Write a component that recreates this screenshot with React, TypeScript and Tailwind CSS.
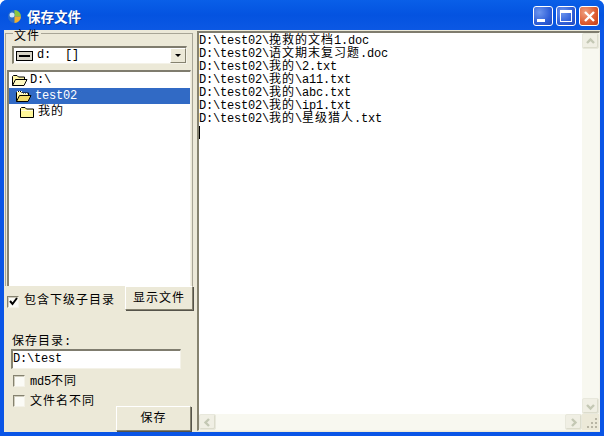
import React from "react";

const sunken = "border-t-2 border-l-2 border-t-[#7f7c6e] border-l-[#85826f] border-r border-b border-r-[#f4f2e8] border-b-[#f4f2e8]";
const raised = "border border-t-white border-l-white border-r-[#85826f] border-b-[#85826f] bg-[#ece9d8] pt-[2px] shadow-[1px_1px_0_#55534a]";

// latin runs are 7px wide per char, the CJK ones 13px
function T({ children }: { children: string }) {
  const parts = children.split(/([\u4e00-\u9fff]+)/).filter(Boolean);
  return (
    <>
      {parts.map((p, i) =>
        /[\u4e00-\u9fff]/.test(p) ? (
          <span key={i} className="tracking-[1px]">{p}</span>
        ) : (
          <span key={i} className="whitespace-pre">{p}</span>
        ),
      )}
    </>
  );
}

function Folder({ open, selected }: { open?: boolean; selected?: boolean }) {
  return (
    <svg width="17" height="13" viewBox="0 0 17 13" className="shrink-0">
      {open ? (
        <>
          <path d="M1.5 11.5V2.5L2.5 1.5H6L7.5 3H13.5V5" fill="#fff6a8" stroke="#000" />
          <path d="M1.5 11.5L4.5 5.5H16L13 11.5Z" fill={selected ? "#f2dc6a" : "#fff9c0"} stroke="#000" />
          {selected && <path d="M2 1h1v1H2zM4 1h1v1H4zM6 1h1v1H6zM3 3h1v1H3zM5 3h1v1H5zM7 3h1v1H7zM9 3h1v1H9zM11 3h1v1h-1z" fill="#fff" />}
        </>
      ) : (
        <>
          <path d="M1.5 11.5V2.5L2.5 1.5H6L7.5 3H14.5V11.5Z" fill="#fff79a" stroke="#000" />
          <path d="M2 4.5H14" stroke="#fffde0" />
        </>
      )}
    </svg>
  );
}

function Check({ checked }: { checked?: boolean }) {
  return (
    <span className="flex h-[12px] w-[12px] shrink-0 items-center justify-center border-t border-l border-t-[#85826f] border-l-[#85826f] border-r border-b border-r-[#f4f2e8] border-b-[#f4f2e8] bg-[#fbfbf6] shadow-[inset_1px_1px_0_#d0cdbd]">
      {checked && (
        <svg width="9" height="9" viewBox="0 0 9 9">
          <path d="M1 4l2.5 3L8 1" fill="none" stroke="#000" strokeWidth="2" />
        </svg>
      )}
    </span>
  );
}

function CaptionButton({ kind }: { kind: "min" | "max" | "close" }) {
  const bg =
    kind === "close"
      ? "bg-[radial-gradient(circle_at_30%_30%,#f0a080,#dc5a30_60%,#c03c18)]"
      : "bg-[radial-gradient(circle_at_30%_30%,#6d96ee,#2f5fd8_60%,#1f48bc)]";
  return (
    <div className={`flex h-[20px] w-[20px] items-center justify-center rounded-[3px] border border-white ${bg}`}>
      {kind === "min" && <div className="mt-[8px] mr-[4px] h-[3px] w-[8px] bg-white" />}
      {kind === "max" && <div className="h-[12px] w-[12px] border border-t-[3px] border-white" />}
      {kind === "close" && (
        <svg width="13" height="13" viewBox="0 0 13 13">
          <path d="M2 2l9 9M11 2l-9 9" stroke="#fff" strokeWidth="2.4" />
        </svg>
      )}
    </div>
  );
}

function ScrollButton({ d }: { d: string }) {
  return (
    <div className="flex h-[16px] w-[17px] items-center justify-center rounded-[2px] border border-[#e8e8dc] bg-[#f0efe4] shadow-[inset_-1px_-1px_0_#dcdccc]">
      <svg width="11" height="11" viewBox="0 0 11 11">
        <path d={d} fill="none" stroke="#c4c8b4" strokeWidth="2.4" />
      </svg>
    </div>
  );
}

const lines = [
  "D:\\test02\\挽救的文档1.doc",
  "D:\\test02\\语文期末复习题.doc",
  "D:\\test02\\我的\\2.txt",
  "D:\\test02\\我的\\a11.txt",
  "D:\\test02\\我的\\abc.txt",
  "D:\\test02\\我的\\ip1.txt",
  "D:\\test02\\我的\\星级猎人.txt",
];

export default function App() {
  return (
    <div className="flex h-[436px] w-[604px] flex-col overflow-hidden rounded-t-[7px] bg-[#0a55e6] font-['Liberation_Mono','Noto_Sans_CJK_SC',monospace]">
      {/* title bar */}
      <div className="flex h-[30px] shrink-0 items-center bg-gradient-to-b from-[#0a5fe8] via-[#0453e0] to-[#0b58e4] pt-[2px] pr-[5px] pl-[8px]">
        <svg width="13" height="13" viewBox="0 0 13 13" className="shrink-0">
          <circle cx="6.5" cy="6.5" r="6.5" fill="#2a6cc8" />
          <path d="M6.5 0a6.5 6.5 0 0 1 6.5 6.5H6.5Z" fill="#8cc63f" />
          <path d="M6.5 6.5H13a6.5 6.5 0 0 1-6.5 6.5Z" fill="#f0b030" />
          <circle cx="4" cy="5" r="2.5" fill="#cfe6ff" />
        </svg>
        <span className="ml-[6px] font-['Noto_Sans_CJK_SC',sans-serif] text-[13.5px] font-bold text-white [text-shadow:1px_1px_0_#0a3aa0]">保存文件</span>
        <div className="ml-auto flex gap-[3px]">
          <CaptionButton kind="min" />
          <CaptionButton kind="max" />
          <CaptionButton kind="close" />
        </div>
      </div>

      {/* client area */}
      <div className="mx-[4px] mb-[4px] flex min-h-0 flex-1 bg-[#ece9d8] text-[12px] leading-[13px] tracking-[-0.2px] text-black">
        {/* left panel */}
        <div className="flex w-[190px] shrink-0 flex-col pt-[3px]">
          <div className="relative mx-[1px] flex h-[253px] shrink-0 flex-col border border-b-0 border-[#a8a596] pt-[12px]">
            <span className="absolute -top-[3px] left-[7px] bg-[#ece9d8] px-[1px] leading-[13px]"><T>文件</T></span>
            <div className={`mr-[5px] ml-[6px] flex h-[18px] items-center bg-white ${sunken}`}>
              <svg width="17" height="10" viewBox="0 0 17 10" className="mr-[4px] ml-[2px] shrink-0">
                <rect x="0.5" y="0.5" width="16" height="9" fill="#d8d5c8" stroke="#000" />
                <path d="M3 5h11" stroke="#000" strokeWidth="2" />
              </svg>
              <T>{"d:  []"}</T>
              <div className="ml-auto flex h-[15px] w-[16px] items-center justify-center border border-t-white border-l-white border-r-[#85826f] border-b-[#85826f] bg-[#ece9d8]">
                <div className="h-0 w-0 border-x-[3px] border-t-[3px] border-x-transparent border-t-black" />
              </div>
            </div>
            <div className={`mx-[1px] mt-[6px] flex min-h-0 flex-1 flex-col bg-white ${sunken} border-b-0`}>
              <div className="flex h-[16px] items-center pl-[2px]"><Folder open /><span className="ml-[2px]">D:\</span></div>
              <div className="flex h-[16px] items-center bg-[#316ac5] pl-[6px] text-white"><Folder open selected /><span className="ml-[3px]">test02</span></div>
              <div className="flex h-[16px] items-center pl-[10px]"><Folder /><span className="ml-[2px]"><T>我的</T></span></div>
            </div>
          </div>
          <div className="flex h-[25px] shrink-0 pr-[1px] pl-[3px]">
            <div className="mt-[9px] flex h-[13px] items-center">
              <Check checked />
              <span className="ml-[5px]"><T>包含下级子目录</T></span>
            </div>
            <button className={`ml-auto h-[24px] w-[68px] ${raised}`}><T>显示文件</T></button>
          </div>
          <div className="mt-[25px] shrink-0 pl-[8px]"><T>保存目录:</T></div>
          <div className={`ml-[7px] flex h-[20px] w-[170px] shrink-0 items-center bg-white ${sunken}`}><T>{"D:\\test"}</T></div>
          <div className="mt-[2px] flex h-[20px] shrink-0 items-center pl-[9px]">
            <Check />
            <span className="ml-[5px] pt-[2px]"><T>md5不同</T></span>
          </div>
          <div className="flex h-[20px] shrink-0 items-center pl-[9px]">
            <Check />
            <span className="ml-[5px] pt-[2px]"><T>文件名不同</T></span>
          </div>
          <div className="-mt-[5px] flex shrink-0 justify-end pr-[3px]">
            <button className={`h-[25px] w-[75px] ${raised}`}><T>保存</T></button>
          </div>
        </div>

        {/* right edit box */}
        <div className={`my-[1px] ml-[3px] flex min-w-0 flex-1 flex-col bg-white ${sunken}`}>
          <div className="flex min-h-0 flex-1">
            <div className="min-w-0 flex-1 pt-[2px]">
              {lines.map((l) => (
                <div key={l} className="h-[13px] whitespace-pre"><T>{l}</T></div>
              ))}
              <div className="h-[13px] w-px bg-black" />
            </div>
            <div className="flex w-[17px] shrink-0 flex-col justify-between bg-[#f8f8f0]">
              <ScrollButton d="M2 7l3.5-3.5L9 7" />
              <ScrollButton d="M2 4l3.5 3.5L9 4" />
            </div>
          </div>
          <div className="flex h-[16px] shrink-0 items-center">
            <div className="flex min-w-0 flex-1 justify-between bg-[#f8f8f0]">
              <ScrollButton d="M7 2L3.5 5.5 7 9" />
              <ScrollButton d="M4 2l3.5 3.5L4 9" />
            </div>
            <svg width="17" height="16" viewBox="0 0 17 16" className="shrink-0 bg-[#ece9d8]">
              <path d="M13 4h2v2h-2zM9 8h2v2H9zM13 8h2v2h-2zM5 12h2v2H5zM9 12h2v2H9zM13 12h2v2h-2z" fill="#b8b5a4" />
            </svg>
          </div>
        </div>
      </div>
    </div>
  );
}
